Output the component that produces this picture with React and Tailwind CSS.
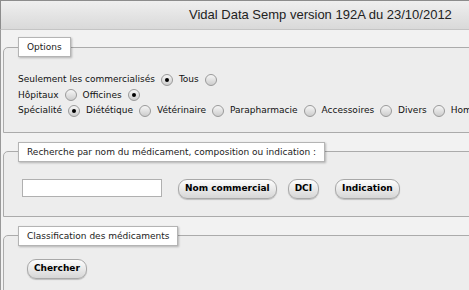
const FONT = { fontFamily: '"DejaVu Sans", Verdana, sans-serif' };

function Radio({ checked }) {
  return (
    <span className="inline-flex items-center justify-center w-[12px] h-[12px] mx-[6px] rounded-full border border-[#9a9a9a] bg-linear-to-b from-[#f6f6f6] to-[#cdcdcd] shrink-0">
      {checked && <span className="w-[4px] h-[4px] rounded-full bg-black" />}
    </span>
  );
}

function Opt({ label, checked }) {
  return (
    <>
      <span>{label}</span>
      <Radio checked={checked} />
    </>
  );
}

function Legend({ children }) {
  return (
    <legend className="px-[8px] h-[20px] leading-[18px] bg-white border border-[#b4b4b4] shadow-[1px_1px_2px_rgba(0,0,0,0.25)] text-[9px] text-[#222]">
      {children}
    </legend>
  );
}

function Btn({ children }) {
  return (
    <button className="h-[20px] px-[6px] rounded-[9px] border border-[#a8a8a8] bg-linear-to-b from-[#fdfdfd] to-[#d6d6d6] shadow-[0_1px_1px_rgba(0,0,0,0.2)] text-[9px] font-bold text-black leading-none">
      {children}
    </button>
  );
}

export default function App() {
  return (
    <div className="w-[469px] h-[290px] overflow-hidden bg-[#f2f2f2]" style={FONT}>
      <div className="h-[30px] border-t border-l border-[#8c8c8c] bg-linear-to-b from-[#efefef] to-[#d9d9d9] flex items-center pl-[188px] border-b border-b-[#c4c4c4]">
        <span className="text-[13px] text-[#222] whitespace-nowrap" style={{ fontFamily: '"Liberation Sans", Arial, sans-serif' }}>
          Vidal Data Semp version 192A du 23/10/2012
        </span>
      </div>

      <div className="border-l border-[#999] pl-[2px] w-[640px] pt-[7px] pb-[19px] flex flex-col gap-[9px]">
        <fieldset className="border border-[#ababab] rounded-tl-[5px] bg-[#ededed] px-[14px] pb-[13px] min-w-0">
          <Legend>Options</Legend>
          <div className="pt-[15px] text-[9px] text-[#111] leading-[15.5px]">
            <div className="flex items-center whitespace-nowrap">
              <Opt label="Seulement les commercialisés" checked />
              <Opt label="Tous" />
            </div>
            <div className="flex items-center whitespace-nowrap">
              <Opt label="Hôpitaux" />
              <Opt label="Officines" checked />
            </div>
            <div className="flex items-center whitespace-nowrap">
              <Opt label="Spécialité" checked />
              <Opt label="Diététique" />
              <Opt label="Vétérinaire" />
              <Opt label="Parapharmacie" />
              <Opt label="Accessoires" />
              <Opt label="Divers" />
              <Opt label="Homéopathie" />
            </div>
          </div>
        </fieldset>

        <fieldset className="border border-[#ababab] rounded-tl-[5px] bg-[#ededed] px-[14px] pb-[17px] min-w-0">
          <Legend>Recherche par nom du médicament, composition ou indication :</Legend>
          <div className="pt-[17px] pl-[4px] flex items-start gap-[16px]">
            <input className="w-[140px] h-[18px] bg-white border border-[#b0b0b0] outline-none" />
            <div className="flex items-center gap-[11px]">
              <Btn>Nom commercial</Btn>
              <Btn>DCI</Btn>
              <span className="ml-[5px] flex"><Btn>Indication</Btn></span>
            </div>
          </div>
        </fieldset>

        <fieldset className="border border-[#ababab] rounded-tl-[5px] bg-[#ededed] px-[14px] pb-[30px] min-w-0">
          <Legend>Classification des médicaments</Legend>
          <div className="pt-[13px] pl-[9px] flex">
            <Btn>Chercher</Btn>
          </div>
        </fieldset>
      </div>
    </div>
  );
}
